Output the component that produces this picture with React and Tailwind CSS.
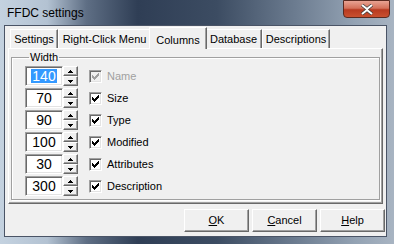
const ui = { fontFamily: '"Liberation Sans", Arial, sans-serif' }

const rows = [
  { value: '140', label: 'Name', disabled: true, selected: true },
  { value: '70', label: 'Size' },
  { value: '90', label: 'Type' },
  { value: '100', label: 'Modified' },
  { value: '30', label: 'Attributes' },
  { value: '300', label: 'Description' },
]

const tabs = [
  { name: 'Settings', w: 'w-[48px]' },
  { name: 'Right-Click Menu', w: 'w-[93px]' },
  { name: 'Columns', w: 'w-[58px]', active: true },
  { name: 'Database', w: 'w-[57px]' },
  { name: 'Descriptions', w: 'w-[68px]' },
]

function SpinHalf({ up }) {
  return (
    <div className="flex-1 flex items-center justify-center bg-[#f0f0f0] border border-t-white border-l-white border-r-[#696969] border-b-[#696969] shadow-[inset_-1px_-1px_0_#a0a0a0]">
      <svg width="5" height="3" viewBox="0 0 5 3">
        {up
          ? <path d="M2 0h1v1h1v1h1v1H0V2h1V1h1z" fill="#000" />
          : <path d="M0 0h5v1H4v1H3v1H2V2H1V1H0z" fill="#000" />}
      </svg>
    </div>
  )
}

function Check({ disabled }) {
  return (
    <div className={`w-[13px] h-[13px] border border-t-[#a0a0a0] border-l-[#a0a0a0] border-r-white border-b-white shadow-[inset_1px_1px_0_#696969,inset_-1px_-1px_0_#e3e3e3] flex items-center justify-center ${disabled ? 'bg-[#f0f0f0]' : 'bg-white'}`}>
      <svg width="7" height="7" viewBox="0 0 7 7">
        <path d="M0 2h1v1h1v1h1V3h1V2h1V1h1V0h1v3H6v1H5v1H4v1H3v1H2V6H1V5H0z" fill={disabled ? '#a0a0a0' : '#000'} />
      </svg>
    </div>
  )
}

function Row({ r }) {
  return (
    <div className="flex items-center h-[20px]">
      <div className="w-[38px] h-[20px] bg-white border border-t-[#a0a0a0] border-l-[#a0a0a0] border-r-white border-b-white shadow-[inset_1px_1px_0_#696969,inset_-1px_-1px_0_#e3e3e3] flex items-center justify-center text-[14px] leading-[14px]">
        {r.selected
          ? <span className="bg-[#3399ff] text-white px-[1px]">{r.value}</span>
          : <span>{r.value}</span>}
      </div>
      <div className="w-[15px] h-[20px] flex flex-col">
        <SpinHalf up />
        <SpinHalf />
      </div>
      <div className="ml-[11px]">
        <Check disabled={r.disabled} />
      </div>
      <span className={`ml-[5px] text-[11px] ${r.disabled ? 'text-[#a0a0a0]' : 'text-black'}`}>{r.label}</span>
    </div>
  )
}

function Button({ children }) {
  return (
    <div className="w-[65px] h-[23px] bg-[#f0f0f0] border border-t-white border-l-white border-r-[#696969] border-b-[#696969] shadow-[inset_-1px_-1px_0_#a0a0a0] flex items-center justify-center text-[11px]">
      {children}
    </div>
  )
}

export default function App() {
  return (
    <div className="w-[394px] h-[244px] overflow-hidden flex flex-col bg-[linear-gradient(90deg,#c4d2e0_0%,#b3c2d2_12%,#5e6e84_22%,#2f3e55_35%,#3c4c62_55%,#6c7c90_75%,#93a2b3_90%,#a8b4c2_100%)]" style={ui}>
      <div className="h-[25px] flex items-start shrink-0">
        <span className="pl-[7px] pt-[5px] text-[12px] leading-[16px] text-black">FFDC settings</span>
        <div className="ml-auto mr-[4px] w-[47px] h-[18px] rounded-b-[4px] border border-[#5a2a20] bg-[linear-gradient(180deg,#e8a393_0%,#d4715a_45%,#b83a20_55%,#c9502f_100%)] flex items-center justify-center">
          <svg width="14" height="11" viewBox="0 0 14 11">
            <path d="M2 1l5 4 5-4M2 10l5-4 5 4" stroke="#3a3a3a" strokeWidth="3.4" fill="none" />
            <path d="M2 1l5 4 5-4M2 10l5-4 5 4" stroke="#fff" strokeWidth="2" fill="none" />
          </svg>
        </div>
      </div>
      <div className="ml-[4px] w-[383px] h-[212px] bg-[#f0f0f0] border border-[#4a5466] flex flex-col text-black">
        <div className="flex items-end h-[22px] pl-[5px]">
          {tabs.map((t) => t.active ? (
            <div key={t.name} className={`${t.w} h-[22px] -mx-[2px] relative z-10 bg-[#f0f0f0] border-l border-t border-r border-l-white border-t-white border-r-[#696969] shadow-[inset_-1px_0_0_#a0a0a0] -mb-[1px] flex justify-center pt-[4px] text-[11px]`}>{t.name}</div>
          ) : (
            <div key={t.name} className={`${t.w} h-[19px] bg-[#f0f0f0] border-l border-t border-r border-l-white border-t-white border-r-[#696969] shadow-[inset_-1px_0_0_#a0a0a0] flex items-center justify-center text-[11px]`}>{t.name}</div>
          ))}
        </div>
        <div className="mx-[3px] h-[156px] border border-t-white border-l-white border-r-[#696969] border-b-[#696969] shadow-[inset_-1px_-1px_0_#a0a0a0] px-[2px] pb-[3px]">
          <fieldset className="mt-[2px] h-[149px] border border-[#a0a0a0] shadow-[1px_1px_0_#fff,inset_1px_1px_0_#fff] pl-[13px] pt-[3px] flex flex-col gap-[2px]">
            <legend className="ml-[4px] px-[1px] text-[11px] leading-[12px]">Width</legend>
            {rows.map((r) => <Row key={r.label} r={r} />)}
          </fieldset>
        </div>
        <div className="flex justify-end gap-[3px] mt-[5px] mr-[1px]">
          <Button><span><u>O</u>K</span></Button>
          <Button><span><u>C</u>ancel</span></Button>
          <Button><span><u>H</u>elp</span></Button>
        </div>
      </div>
    </div>
  )
}
